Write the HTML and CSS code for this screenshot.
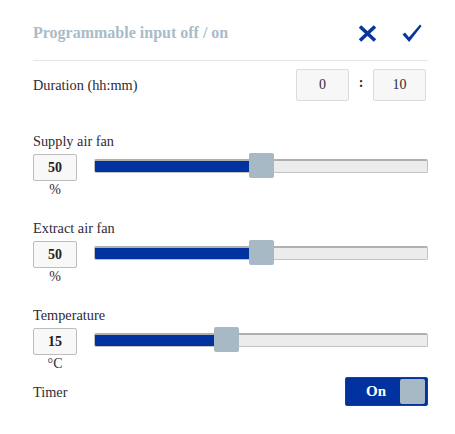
FILE: index.html
```html
<!DOCTYPE html>
<html>
<head>
<meta charset="utf-8">
<link rel="stylesheet" href="styles.css">
</head>
<body>
<div class="panel">
  <div class="header">
    <div class="title">Programmable input off / on</div>
    <div class="actions">
      <svg class="icon" width="19" height="17" viewBox="0 0 19 17"><path d="M2 1.5 L17 15.5 M17 1.5 L2 15.5" stroke="#0a3699" stroke-width="3.6" stroke-linecap="butt" fill="none"/></svg>
      <svg class="icon" width="20" height="19" viewBox="0 0 20 19"><path d="M0.5 10.5 L3 8.6 L7 13.2 L18 0.6 L19.6 2 L7.2 18 Z" fill="#0a3699"/></svg>
    </div>
  </div>

  <div class="duration">
    <div class="label">Duration (hh:mm)</div>
    <div class="time">
      <div class="tbox">0</div>
      <div class="colon">:</div>
      <div class="tbox">10</div>
    </div>
  </div>

  <div class="section">
    <div class="label">Supply air fan</div>
    <div class="ctrl">
      <div class="valcol">
        <div class="vbox">50</div>
        <div class="unit">%</div>
      </div>
      <div class="slider" style="--p:0.5">
        <div class="track"><div class="fill"></div></div>
        <div class="thumb"></div>
      </div>
    </div>
  </div>

  <div class="section">
    <div class="label">Extract air fan</div>
    <div class="ctrl">
      <div class="valcol">
        <div class="vbox">50</div>
        <div class="unit">%</div>
      </div>
      <div class="slider" style="--p:0.5">
        <div class="track"><div class="fill"></div></div>
        <div class="thumb"></div>
      </div>
    </div>
  </div>

  <div class="section">
    <div class="label">Temperature</div>
    <div class="ctrl">
      <div class="valcol">
        <div class="vbox">15</div>
        <div class="unit">°C</div>
      </div>
      <div class="slider" style="--p:0.388">
        <div class="track"><div class="fill"></div></div>
        <div class="thumb"></div>
      </div>
    </div>
  </div>

  <div class="timer">
    <div class="label">Timer</div>
    <div class="toggle">
      <span class="ton">On</span>
      <span class="knob"></span>
    </div>
  </div>
</div>
</body>
</html>
```

FILE: styles.css
```css
* { box-sizing: border-box; }
body {
  margin: 0;
  background: #fff;
  font-family: "Liberation Serif", "Times New Roman", serif;
  color: #2e2a36;
}
.panel {
  padding: 0 27px 0 33px;
}
.header {
  height: 61px;
  padding-top: 6px;
  display: flex;
  align-items: center;
  justify-content: space-between;
  border-bottom: 1px solid #e6e6e6;
}
.title {
  font-size: 16px;
  font-weight: bold;
  color: #a9bcc8;
}
.actions {
  display: flex;
  align-items: center;
  gap: 25px;
  margin-right: 6px;
}
.icon { display: block; }
.label {
  font-size: 14.3px;
  line-height: 16px;
}
.duration {
  padding-top: 8px;
  display: flex;
  align-items: center;
  justify-content: space-between;
}
.time {
  display: flex;
  align-items: center;
  margin-right: 2px;
}
.tbox {
  width: 53px;
  height: 32px;
  background: #f7f7f7;
  border: 1px solid #dcdcdc;
  border-radius: 2px;
  display: flex;
  align-items: center;
  justify-content: center;
  font-size: 14px;
}
.colon {
  width: 24px;
  text-align: center;
  font-size: 14px;
  font-weight: bold;
  margin-top: -4px;
}
.section {
  margin-top: 32px;
}
.section + .section {
  margin-top: 22px;
}
.ctrl {
  margin-top: 5px;
  display: flex;
  align-items: flex-start;
  gap: 17px;
}
.valcol {
  width: 44px;
  display: flex;
  flex-direction: column;
  align-items: center;
}
.vbox {
  width: 44px;
  height: 27px;
  background: #f8f8f8;
  border: 1px solid #bdbdbd;
  border-radius: 2px;
  display: flex;
  align-items: center;
  justify-content: center;
  font-size: 14px;
  font-weight: bold;
  color: #222;
}
.unit {
  font-size: 14px;
  line-height: 16px;
  margin-top: 1px;
}
.slider {
  position: relative;
  flex: 1;
  height: 25px;
  margin-top: -1px;
  --tw: 25px;
}
.track {
  position: absolute;
  left: 0;
  right: 0;
  top: 6px;
  height: 14px;
  background: #ececec;
  border: 1px solid #c2c2c2;
  border-top: 2px solid #b0b0b0;
  border-radius: 2px;
  overflow: hidden;
}
.fill {
  height: 100%;
  width: calc((100% - var(--tw)) * var(--p) + 4px);
  background: #0033a0;
}
.thumb {
  position: absolute;
  top: 0;
  left: calc((100% - var(--tw)) * var(--p));
  width: var(--tw);
  height: 25px;
  background: #a6b9c5;
  border-radius: 2px;
}
.timer {
  margin-top: 5px;
  display: flex;
  align-items: center;
  justify-content: space-between;
}
.toggle {
  width: 83px;
  height: 29px;
  background: #0033a0;
  border: 1px solid #1c3f96;
  border-radius: 2px;
  display: flex;
  align-items: center;
  padding: 0 2px 0 0;
}
.ton {
  flex: 1;
  text-align: center;
  color: #fff;
  font-weight: bold;
  font-size: 15px;
  padding-left: 6px;
}
.knob {
  width: 25px;
  height: 25px;
  background: #a6b9c5;
  border-radius: 2px;
}
```
